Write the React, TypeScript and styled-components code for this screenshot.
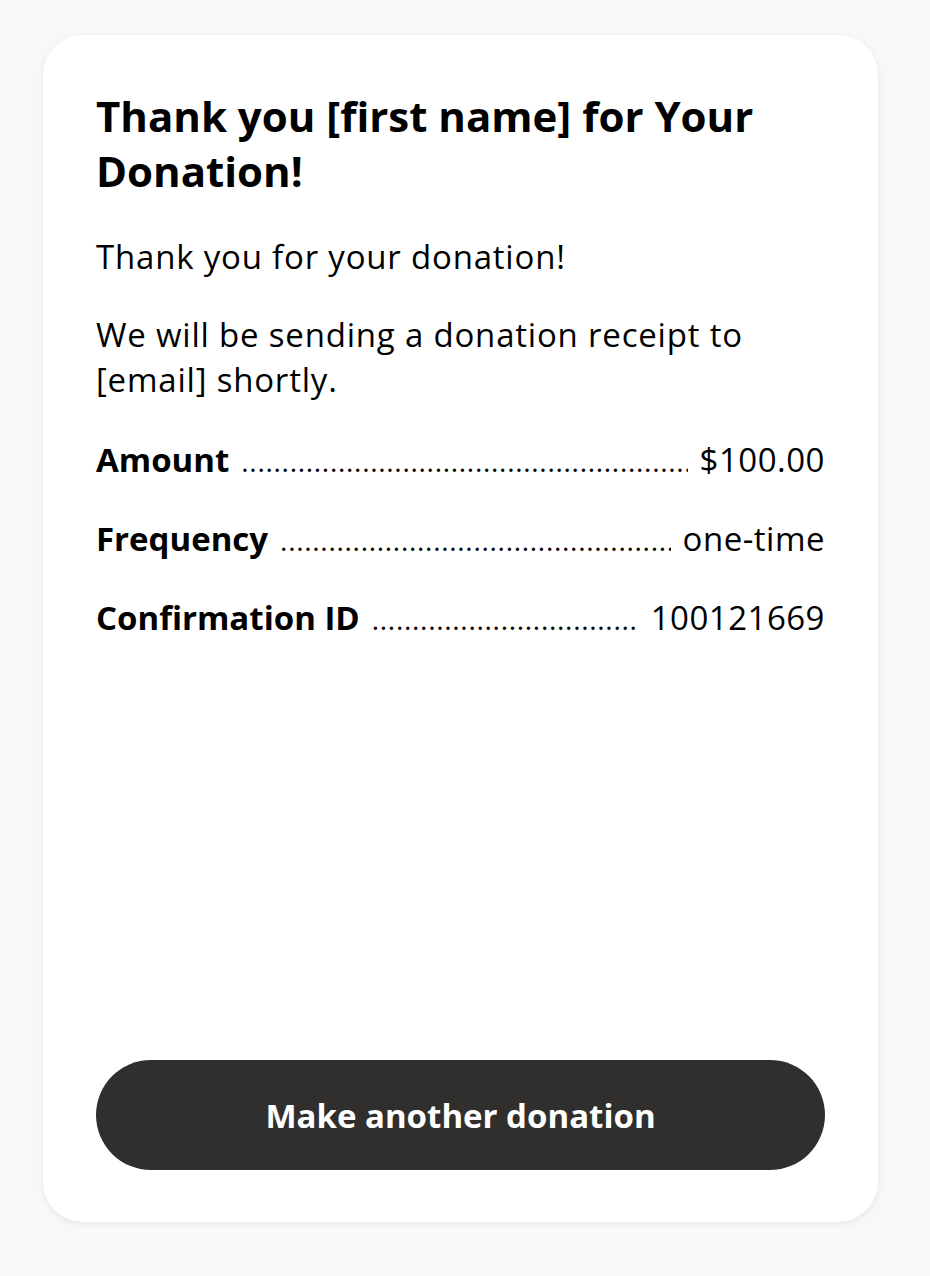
import React from 'react';
import styled, { createGlobalStyle } from 'styled-components';

const GlobalStyle = createGlobalStyle`
  html, body {
    margin: 0;
    padding: 0;
    background: #f8f8f6;
  }
  body {
    font-family: "Open Sans", "Noto Sans", sans-serif;
    color: #000;
  }
`;

const Page = styled.div`
  min-height: 1276px;
  padding: 35px 52px 0 43px;
  box-sizing: border-box;
`;

const Card = styled.div`
  background: #fff;
  border-radius: 40px;
  box-shadow: 0 2px 6px rgba(0, 0, 0, 0.08);
  height: 1187px;
  box-sizing: border-box;
  padding: 53px 53px 52px;
  display: flex;
  flex-direction: column;
`;

const Title = styled.h1`
  margin: 0;
  font-size: 42px;
  line-height: 55px;
  font-weight: 700;
`;

const Text = styled.p<{ $top: number }>`
  margin: 0;
  font-size: 33px;
  line-height: 45px;
  letter-spacing: 0.8px;
  margin-top: ${(p) => p.$top}px;
`;

const Details = styled.div`
  margin-top: 35px;
  display: flex;
  flex-direction: column;
  gap: 34px;
`;

const Row = styled.div`
  display: flex;
  align-items: baseline;
  font-size: 33px;
  line-height: 45px;
  letter-spacing: 0.5px;
  white-space: nowrap;
`;

const Label = styled.span`
  font-weight: 700;
  letter-spacing: 0;
`;

// leader dots between label and value
const Dots = styled.span`
  flex: 1 1 0;
  min-width: 0;
  overflow: hidden;
  margin: 0 12px;
  font-size: 28px;
  line-height: 28px;
  letter-spacing: 0.7px;
`;

const Value = styled.span``;

const Spacer = styled.div`
  flex: 1;
`;

const Button = styled.button`
  height: 110px;
  border: none;
  border-radius: 55px;
  background: #302f2d;
  color: #fff;
  font-family: inherit;
  font-size: 33px;
  font-weight: 700;
  cursor: pointer;
`;

const rows = [
  { label: 'Amount', value: '$100.00' },
  { label: 'Frequency', value: 'one-time' },
  { label: 'Confirmation ID', value: '100121669' },
];

export default function App() {
  return (
    <Page>
      <GlobalStyle />
      <Card>
        <Title>Thank you [first name] for Your Donation!</Title>
        <Text $top={36}>Thank you for your donation!</Text>
        <Text $top={33}>We will be sending a donation receipt to [email] shortly.</Text>
        <Details>
          {rows.map((r) => (
            <Row key={r.label}>
              <Label>{r.label}</Label>
              <Dots>{'.'.repeat(120)}</Dots>
              <Value>{r.value}</Value>
            </Row>
          ))}
        </Details>
        <Spacer />
        <Button>Make another donation</Button>
      </Card>
    </Page>
  );
}
